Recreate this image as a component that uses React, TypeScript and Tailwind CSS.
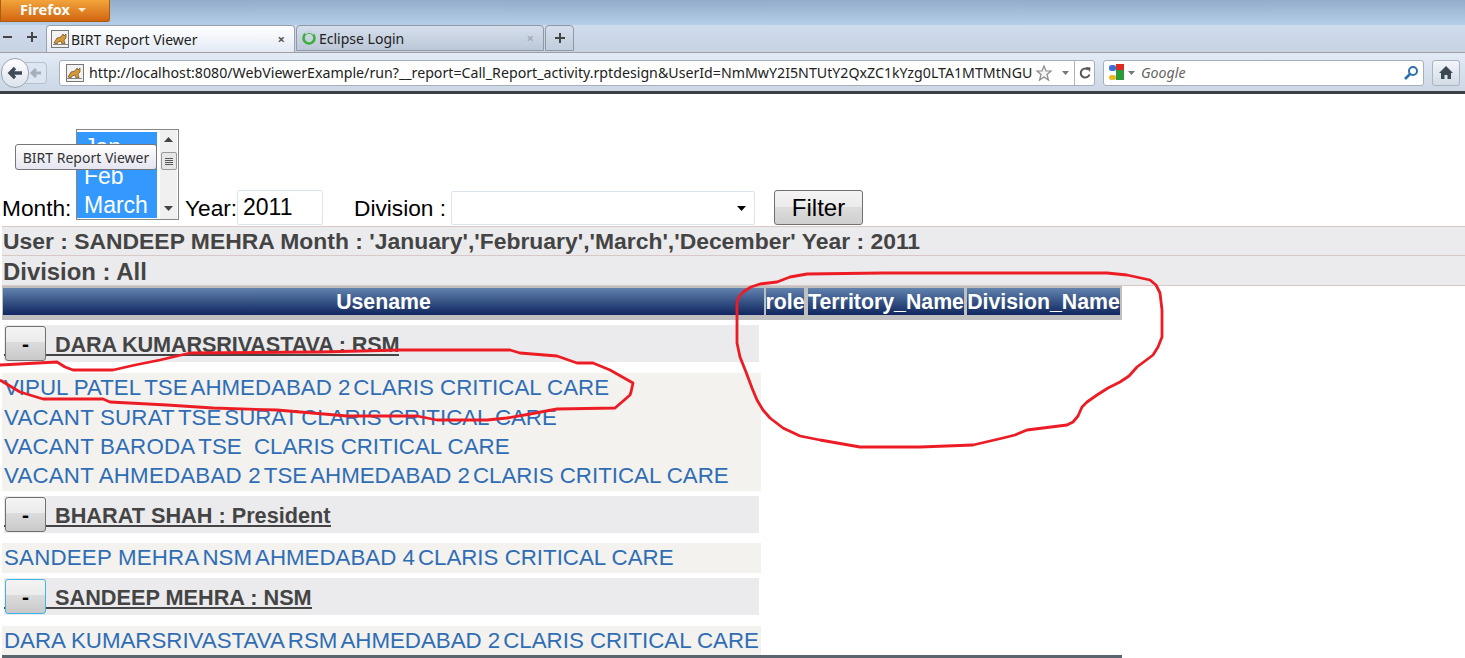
import React from "react";

const UI = { fontFamily: '"Noto Sans", sans-serif' };
const ARIAL = { fontFamily: '"Liberation Sans", Arial, sans-serif' };

function Tomcat() {
  return (
    <span className="inline-flex h-[18px] w-[18px] shrink-0 items-center justify-center border border-[#777] bg-[#f2f2f2]">
      <svg width="15" height="14" viewBox="0 0 15 14">
        <path d="M1 11 L4 6 L8 5 L10 2 L11 4 L13 2 L13 6 L11 8 L12 12 L9 12 L8 9 L5 10 L4 12 Z" fill="#d49a3a" stroke="#6b4a1e" strokeWidth="0.7" />
        <path d="M0 12.5 H15" stroke="#888" strokeWidth="1" />
      </svg>
    </span>
  );
}

function TabBarGlyphs() {
  return (
    <div className="flex w-[46px] shrink-0 items-center pb-[3px] pl-[3px] text-[#444]">
      <svg width="42" height="12" viewBox="0 0 42 12">
        <path d="M0 6H9" stroke="#444" strokeWidth="2" />
        <path d="M24 6H34M29 1V11" stroke="#444" strokeWidth="2" />
      </svg>
    </div>
  );
}

function Tabs() {
  return (
    <div className="flex h-[27px] bg-gradient-to-b from-[#cfdcee] to-[#c7d2e2] text-[14px] text-[#222]" style={UI}>
      <TabBarGlyphs />
      <div className="flex h-[27px] w-[249px] shrink-0 items-center gap-[2px] rounded-t-[4px] border border-b-0 border-[#9aa3ad] bg-gradient-to-b from-[#ffffff] to-[#e3eaf4] pl-[4px]">
        <Tomcat />
        <span>BIRT Report Viewer</span>
        <span className="ml-auto pr-[9px] text-[13px] font-bold leading-none text-[#555]">×</span>
      </div>
      <div className="ml-[1px] flex h-[26px] w-[248px] shrink-0 items-center gap-[2px] rounded-t-[4px] border border-[#8f98a4] bg-gradient-to-b from-[#d5dfec] to-[#bcc7d8] pl-[4px]">
        <svg width="16" height="16" viewBox="0 0 16 16">
          <circle cx="8" cy="8" r="5.5" fill="none" stroke="#3fae3a" strokeWidth="2.6" />
          <path d="M4 3.5 A6 6 0 0 1 13 4" fill="none" stroke="#c6d4e2" strokeWidth="2.6" />
        </svg>
        <span>Eclipse Login</span>
        <span className="ml-auto pr-[9px] text-[13px] font-bold leading-none text-[#a3adba]">×</span>
      </div>
      <div className="ml-[1px] flex h-[26px] w-[29px] shrink-0 items-center justify-center rounded-t-[4px] border border-[#8f98a4] bg-gradient-to-b from-[#d5dfec] to-[#c2cddd]">
        <svg width="12" height="12" viewBox="0 0 12 12">
          <path d="M1 6H11M6 1V11" stroke="#444" strokeWidth="2" />
        </svg>
      </div>
    </div>
  );
}

function NavBar() {
  return (
    <div className="flex h-[39px] items-center border-t border-[#a0a0a0] bg-gradient-to-b from-[#e2eaf5] to-[#cbd7e6] pt-[1px] text-[14.2px] text-[#222]" style={UI}>
      <div className="relative ml-[1px] flex h-[30px] w-[58px] shrink-0 items-center">
        <div className="absolute left-[24px] top-[4px] flex h-[22px] w-[22px] items-center justify-center rounded-r-[4px] border border-[#b5c0ce] bg-[#dde5f0]">
          <svg width="14" height="14" viewBox="0 0 14 14">
            <path d="M3 7H12M7 3L3 7L7 11" fill="none" stroke="#a5afbb" strokeWidth="3" />
          </svg>
        </div>
        <div className="absolute left-0 top-[0px] flex h-[30px] w-[28px] items-center justify-center rounded-full border border-[#9aa4b0] bg-gradient-to-b from-[#ffffff] to-[#dce3ec]">
          <svg width="18" height="16" viewBox="0 0 18 16">
            <path d="M4 8H16M9 3L4 8L9 13" fill="none" stroke="#3f4a57" strokeWidth="3.4" />
          </svg>
        </div>
      </div>
      <div className="flex h-[26px] w-[1036px] shrink-0 items-center rounded-[3px] border border-[#a7afba] bg-white">
        <div className="flex w-[29px] shrink-0 justify-center"><Tomcat /></div>
        <span className="whitespace-nowrap">http://localhost:8080/WebViewerExample/run?__report=Call_Report_activity.rptdesign&amp;UserId=NmMwY2I5NTUtY2QxZC1kYzg0LTA1MTMtNGU</span>
        <div className="ml-auto flex items-center">
          <svg width="18" height="18" viewBox="0 0 18 18">
            <path d="M9 2L11 7H16L12 10.500L13.500 16L9 13L4.500 16L6 10.500L2 7H7Z" fill="#f4f4f4" stroke="#8a8a8a" strokeWidth="1.2" />
          </svg>
          <svg className="ml-[9px] mr-[5px]" width="7" height="4" viewBox="0 0 7 4"><path d="M0 0H7L3.500 4Z" fill="#777" /></svg>
          <div className="flex h-[24px] w-[20px] items-center justify-center border-l border-[#b0b0b0]">
            <svg width="14" height="14" viewBox="0 0 14 14">
              <path d="M11.500 8.500A4.500 4.500 0 1 1 10 3.500" fill="none" stroke="#555" strokeWidth="2" />
              <path d="M8 1L12.500 1.500L12 6Z" fill="#555" />
            </svg>
          </div>
        </div>
      </div>
      <div className="ml-[8px] flex h-[26px] w-[321px] shrink-0 items-center rounded-[3px] border border-[#a7afba] bg-white">
        <svg className="ml-[4px]" width="17" height="17" viewBox="0 0 17 17">
          <rect x="8" y="0" width="8" height="8" fill="#dd2b1f" />
          <rect x="1" y="1" width="7" height="6" rx="2.500" fill="#3a6fd8" />
          <rect x="8" y="6" width="8" height="10" fill="#2c9a3a" />
          <rect x="1" y="11" width="7" height="5" rx="2.500" fill="#eab81f" />
        </svg>
        <svg className="ml-[3px]" width="7" height="4" viewBox="0 0 7 4"><path d="M0 0H7L3.500 4Z" fill="#777" /></svg>
        <span className="ml-[6px] italic text-[#666]">Google</span>
        <svg className="ml-auto mr-[4px]" width="16" height="16" viewBox="0 0 16 16">
          <circle cx="10" cy="6" r="4" fill="none" stroke="#2f6fb0" strokeWidth="2" />
          <path d="M7 9L2 14" stroke="#2f6fb0" strokeWidth="2.600" />
        </svg>
      </div>
      <div className="ml-[8px] flex h-[26px] w-[28px] shrink-0 items-center justify-center rounded-[3px] border border-[#aab4c0] bg-gradient-to-b from-[#f2f5f9] to-[#d3dbe6]">
        <svg width="16" height="15" viewBox="0 0 16 15">
          <path d="M8 1L15 8H13V14H9.500V10H6.500V14H3V8H1Z" fill="#3d4855" />
        </svg>
      </div>
    </div>
  );
}

function BrowserChrome() {
  return (
    <div>
      <div className="h-[25px] bg-gradient-to-b from-[#92acca] to-[#b6cee8]">
        <div className="flex h-[22px] w-[110px] items-center justify-center gap-[8px] rounded-br-[3px] border border-t-0 border-[#a95e12] bg-gradient-to-b from-[#f2a43a] to-[#d2650f] pb-[2px] pr-[4px] text-[14.5px] font-bold text-white" style={UI}>
          <span>Firefox</span>
          <svg width="8" height="4" viewBox="0 0 8 4"><path d="M0 0H8L4 4Z" fill="#ffe9cf" /></svg>
        </div>
      </div>
      <Tabs />
      <NavBar />
      <div className="h-[3px] bg-[#3c3f43]" />
    </div>
  );
}

function ToolbarForm() {
  return (
    <div className="relative flex h-[132px] items-end pb-[1px] pl-[2px] text-[22.7px] leading-none text-black" style={ARIAL}>
      <span className="mb-[5px] w-[74px]">Month:</span>
      <div className="mb-[5px] flex h-[91px] w-[103px] border border-[#868686] bg-white">
        <div className="mb-[1px] mt-[2px] flex w-[80px] flex-col overflow-hidden bg-[#3399ff] pl-[7px] pt-[1px] text-[23px] leading-[29px] text-white">
          <span>Jan</span>
          <span>Feb</span>
          <span>March</span>
        </div>
        <div className="ml-[3px] flex w-[17px] flex-col items-center bg-[#f0f0f0] pt-[7px]">
          <svg width="9" height="5" viewBox="0 0 9 5"><path d="M0 5L4.500 0L9 5Z" fill="#444" /></svg>
          <div className="mt-[10px] flex h-[18px] w-[16px] flex-col items-center justify-center gap-[1px] rounded-[2px] border border-[#999] bg-[#e6e6e6]">
            <span className="h-[1px] w-[8px] bg-[#555]" />
            <span className="h-[1px] w-[8px] bg-[#555]" />
            <span className="h-[1px] w-[8px] bg-[#555]" />
            <span className="h-[1px] w-[8px] bg-[#555]" />
          </div>
          <svg className="mb-[8px] mt-auto" width="9" height="5" viewBox="0 0 9 5"><path d="M0 0L4.500 5L9 0Z" fill="#444" /></svg>
        </div>
      </div>
      <span className="mb-[5px] ml-[6px] w-[52px]">Year:</span>
      <div className="flex h-[35px] w-[86px] items-center rounded-[2px] border border-[#dbe3ec] pl-[5px] text-[23px]">2011</div>
      <span className="mb-[5px] ml-[31px] w-[97px]">Division :</span>
      <div className="flex h-[34px] w-[304px] items-center justify-end rounded-[2px] border border-[#dbe3ec] pr-[8px]">
        <svg width="9" height="5" viewBox="0 0 9 5"><path d="M0 0H9L4.500 5Z" fill="#000" /></svg>
      </div>
      <div className="ml-[19px] flex h-[35px] w-[89px] items-center justify-center rounded-[3px] border border-[#707070] bg-[linear-gradient(to_bottom,#f4f4f4_0%,#ebebeb_50%,#dcdcdc_50%,#cfcfcf_100%)] text-[24px]">Filter</div>
      <div className="absolute left-[15px] top-[50px] flex h-[26px] w-[142px] items-center justify-center rounded-[3px] border border-[#767676] bg-gradient-to-b from-[#ffffff] to-[#e4e5f0] pt-[1px] text-[14px] text-[#333]" style={UI}>
        BIRT Report Viewer
      </div>
    </div>
  );
}

function Banner({ children, cls }: { children: React.ReactNode; cls: string }) {
  return (
    <div className={`ml-[2px] flex items-center border-b border-[#d8c8c8] bg-[#ebebed] pl-[1px] font-bold leading-none text-[#444] ${cls}`} style={ARIAL}>
      {children}
    </div>
  );
}

function TableHeader() {
  const cell = "flex h-[27px] items-center justify-center whitespace-nowrap bg-gradient-to-b from-[#6283ae] to-[#12265f] pt-[2px]";
  return (
    <div className="ml-[2px] flex h-[34px] w-[1120px] bg-[#bfbfbf] pl-[1px] pt-[2px] text-[21.3px] font-bold text-white" style={ARIAL}>
      <div className={`${cell} w-[761px]`}>Usename</div>
      <div className={`${cell} ml-[2px] w-[38px]`}>role</div>
      <div className={`${cell} ml-[4px] w-[156px]`}>Territory_Name</div>
      <div className={`${cell} ml-[3px] w-[153px]`}>Division_Name</div>
    </div>
  );
}

function GroupHeader({ title, focused, top, titleCls = "" }: { title: string; focused?: boolean; top: string; titleCls?: string }) {
  return (
    <div className={`ml-[4px] flex h-[37px] w-[755px] items-start bg-[#ebebed] ${top}`} style={ARIAL}>
      <div className="flex h-[31px] items-start border-b-2 border-[#444]">
        <div className={`relative ml-[1px] mt-[1px] flex h-[35px] w-[41px] shrink-0 items-center justify-center rounded-[3px] border bg-[linear-gradient(to_bottom,#f4f4f4_0%,#ebebeb_45%,#dcdcdc_45%,#c9c9c9_100%)] text-[21px] font-bold text-black ${focused ? "border-[#3fb4ea]" : "border-[#707070]"}`}>
          -
        </div>
        <span className={`whitespace-nowrap pl-[9px] pt-[1px] text-[21.7px] font-bold leading-[38px] text-[#444] ${titleCls}`}>{title}</span>
      </div>
    </div>
  );
}

function Rows({ rows, top, h }: { rows: string[][]; top: string; h: string }) {
  return (
    <div className={`ml-[2px] flex w-[759px] flex-col justify-center bg-[#f3f2ef] pl-[2px] text-[22.3px] leading-[29.4px] text-[#2f6db5] ${top} ${h}`} style={ARIAL}>
      {rows.map((r, i) => (
        <div key={i} className="flex gap-[3px] whitespace-pre">
          {r.map((c, j) => (
            <span key={j} className={j === 0 && (c.startsWith("VACANT") || c.startsWith("SANDEEP")) ? "tracking-[0.2px]" : ""}>{c}</span>
          ))}
        </div>
      ))}
    </div>
  );
}

function Annotations() {
  return (
    <svg className="pointer-events-none absolute left-0 top-0" width="1465" height="658" viewBox="0 0 1465 658">
      <polyline
        points="737,302 739,297 743,292 751,287 760,284 777,282 790,277 807,274 883,273 1107,273 1127,275 1150,280 1156,285 1160,293 1162,310 1162,337 1158,347 1153,355 1137,367 1129,376 1120,382 1108,388 1097,395 1087,402 1082,407 1078,416 1073,422 1067,425 1027,430 1015,435 1003,438 973,445 920,447 860,447 820,440 800,436 783,428 770,418 763,410 757,400 752,388 746,372 740,357 737,343 737,302"
        fill="none"
        stroke="#ed1c24"
        strokeWidth="2.800"
        strokeLinejoin="round"
      />
      <polyline
        points="0,365 57,362 65,367 73,370 113,370 135,365 160,360 190,353 320,352 400,350 510,350 520,353 557,356 577,363 593,363 610,370 633,383 631,392 630,395 622,402 615,408 557,409 530,414 507,418 487,420 437,420 417,416 363,416 347,416 277,410 213,408 167,405 110,402 103,399 43,399 20,392 0,380"
        fill="none"
        stroke="#ed1c24"
        strokeWidth="2.800"
        strokeLinejoin="round"
      />
    </svg>
  );
}

export default function App() {
  return (
    <div className="relative h-[658px] w-[1465px] overflow-hidden bg-white">
      <BrowserChrome />
      <ToolbarForm />
      <div className="ml-[2px] h-[1px] bg-[#d8c8c8]" />
      <Banner cls="h-[29px] pt-[1px] text-[22.9px]">User : SANDEEP MEHRA Month : 'January','February','March','December' Year : 2011</Banner>
      <Banner cls="h-[30px] pt-[2px] text-[23.9px]">Division : All</Banner>
      <TableHeader />
      <GroupHeader title="DARA KUMARSRIVASTAVA : RSM" titleCls="tracking-[-0.16px]" top="mt-[5px]" />
      <Rows
        top="mt-[11px]"
        h="h-[118px]"
        rows={[
          ["VIPUL PATEL", "TSE", "AHMEDABAD 2", "CLARIS CRITICAL CARE"],
          ["VACANT SURAT", "TSE", "SURAT", "CLARIS CRITICAL CARE"],
          ["VACANT BARODA", "TSE", " ", "CLARIS CRITICAL CARE"],
          ["VACANT AHMEDABAD 2", "TSE", "AHMEDABAD 2", "CLARIS CRITICAL CARE"],
        ]}
      />
      <GroupHeader title="BHARAT SHAH : President" top="mt-[5px]" />
      <Rows top="mt-[10px]" h="h-[30px]" rows={[["SANDEEP MEHRA", "NSM", "AHMEDABAD 4", "CLARIS CRITICAL CARE"]]} />
      <GroupHeader title="SANDEEP MEHRA : NSM" focused top="mt-[5px]" />
      <Rows top="mt-[11px]" h="h-[29px]" rows={[["DARA KUMARSRIVASTAVA", "RSM", "AHMEDABAD 2", "CLARIS CRITICAL CARE"]]} />
      <div className="ml-[2px] h-[3px] w-[1120px] bg-[#5a6570]" />
      <Annotations />
    </div>
  );
}
